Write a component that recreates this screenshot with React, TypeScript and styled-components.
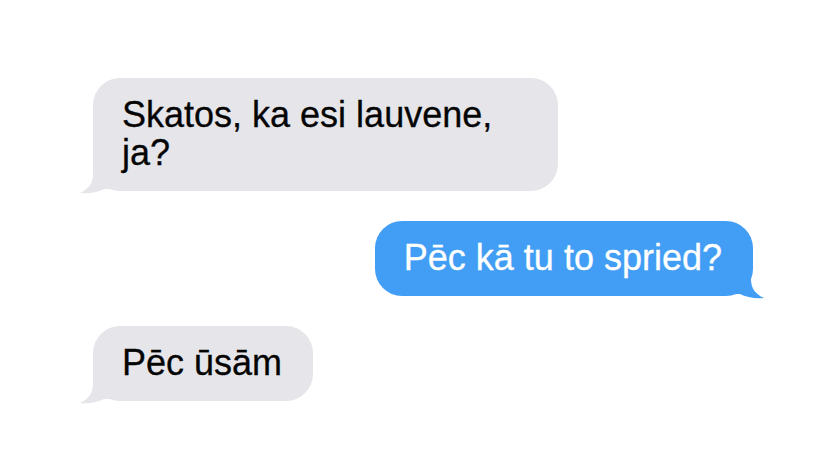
import React from 'react';
import styled, { createGlobalStyle } from 'styled-components';

type Side = 'in' | 'out';

interface Message {
    id: number;
    side: Side;
    text: string;
}

const messages: Message[] = [
    { id: 1, side: 'in', text: 'Skatos, ka esi lauvene, ja?' },
    { id: 2, side: 'out', text: 'Pēc kā tu to spried?' },
    { id: 3, side: 'in', text: 'Pēc ūsām' },
];

const GRAY = '#e5e5ea';
const BLUE = '#419ef4';

const GlobalStyle = createGlobalStyle`
  html, body {
    margin: 0;
    padding: 0;
    background: #ffffff;
  }
  body {
    font-family: "Liberation Sans", Arial, sans-serif;
  }
`;

const Thread = styled.div`
  width: 830px;
  height: 473px;
  box-sizing: border-box;
  padding: 78px 77px 0 93px;
  display: flex;
  flex-direction: column;
  gap: 30px;
  overflow: hidden;
`;

const Row = styled.div<{ $side: Side }>`
  display: flex;
  justify-content: ${p => (p.$side === 'out' ? 'flex-end' : 'flex-start')};
`;

const Bubble = styled.div<{ $side: Side }>`
  position: relative;
  box-sizing: border-box;
  max-width: 465px;
  padding: 18px 31px 19px 29px;
  border-radius: 27px;
  background: ${p => (p.$side === 'out' ? BLUE : GRAY)};
  color: ${p => (p.$side === 'out' ? '#ffffff' : '#050505')};
  font-size: 36px;
  line-height: 38px;
  -webkit-text-stroke: 0.3px ${p => (p.$side === 'out' ? '#ffffff' : '#050505')};
`;

const TailSvg = styled.svg<{ $side: Side }>`
  position: absolute;
  bottom: -3px;
  width: 36px;
  height: 34px;
  ${p => (p.$side === 'out' ? 'right: -12px; transform: scaleX(-1);' : 'left: -14px;')}
`;

const Tail: React.FC<{ side: Side }> = ({ side }) => (
    <TailSvg $side={side} viewBox="0 0 36 34">
        <path
            d="M14 0 L14 14 C14 23 10 29 1 33 C10 34 19 32 25 29 L36 29 L36 0 Z"
            fill={side === 'out' ? BLUE : GRAY}
        />
    </TailSvg>
);

const App: React.FC = () => {
    return (
        <>
            <GlobalStyle />
            <Thread>
                {messages.map(m => (
                    <Row key={m.id} $side={m.side}>
                        <Bubble $side={m.side}>
                            <Tail side={m.side} />
                            {m.text}
                        </Bubble>
                    </Row>
                ))}
            </Thread>
        </>
    );
};

export default App;
